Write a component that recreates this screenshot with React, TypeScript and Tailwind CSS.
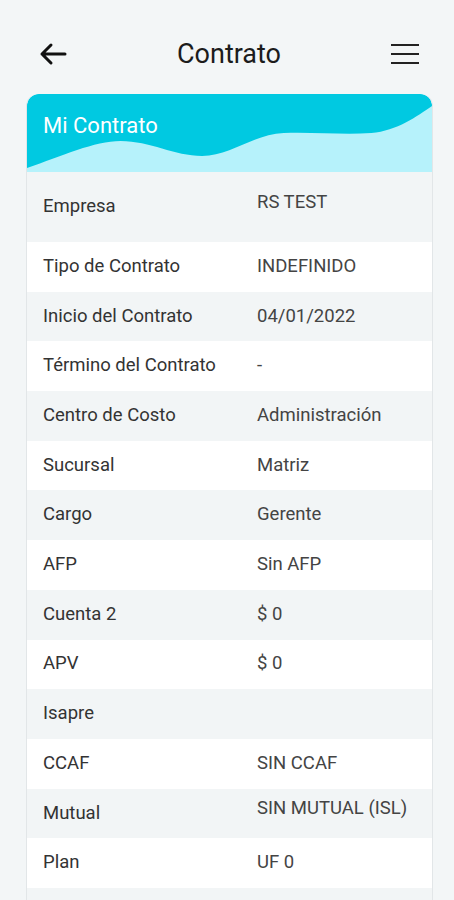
import React from "react";

type Row = { label: string; value: string; lift?: boolean; tall?: boolean };

const rows: Row[] = [
  { label: "Empresa", value: "RS TEST", lift: true, tall: true },
  { label: "Tipo de Contrato", value: "INDEFINIDO" },
  { label: "Inicio del Contrato", value: "04/01/2022" },
  { label: "Término del Contrato", value: "-" },
  { label: "Centro de Costo", value: "Administración" },
  { label: "Sucursal", value: "Matriz" },
  { label: "Cargo", value: "Gerente" },
  { label: "AFP", value: "Sin AFP" },
  { label: "Cuenta 2", value: "$ 0" },
  { label: "APV", value: "$ 0" },
  { label: "Isapre", value: "" },
  { label: "CCAF", value: "SIN CCAF" },
  { label: "Mutual", value: "SIN MUTUAL (ISL)", lift: true },
  { label: "Plan", value: "UF 0" },
  { label: "", value: "" },
];

const WaveHeader = () => {
  return (
    <div className="relative h-[78px] bg-[#b6f2fb] overflow-hidden rounded-t-[12px]">
      <svg
        className="absolute inset-0 w-full h-full"
        viewBox="0 0 407 78"
        preserveAspectRatio="none"
      >
        <path
          d="M0 74 C35 62 68 47 94 47 C124 47 148 62 176 62 C204 62 228 40 258 39 C290 38 318 41 346 39 C372 37 392 22 407 12 L407 0 L0 0 Z"
          fill="#00c9e1"
        />
      </svg>
      <span className="absolute left-[16px] top-[15px] text-[22px] text-white">
        Mi Contrato
      </span>
    </div>
  );
};

const App = () => {
  return (
    <div
      className="min-h-[900px] bg-[#f3f6f7] text-[#333] pt-[27px]"
      style={{ fontFamily: "Roboto, 'Noto Sans', sans-serif" }}
    >
      <div className="flex items-center justify-between h-[54px] pl-[39px] pr-[35px]">
        <svg width="28" height="24" viewBox="0 0 28 24" fill="none">
          <path
            d="M26 12 H3 M12 3 L3 12 L12 21"
            stroke="#111"
            strokeWidth="3"
            strokeLinecap="round"
            strokeLinejoin="round"
          />
        </svg>
        <h1 className="text-[27px] text-[#1c1c1c]">Contrato</h1>
        <div className="flex flex-col gap-[6.5px] w-[28px]">
          <span className="h-[2.5px] bg-[#222]" />
          <span className="h-[2.5px] bg-[#222]" />
          <span className="h-[2.5px] bg-[#222]" />
        </div>
      </div>

      <div className="mx-[26px] mt-[13px] w-[407px] border border-[#e2e6e8] border-t-0 rounded-t-[12px] bg-white overflow-hidden">
        <WaveHeader />
        {rows.map((r, i) => (
          <div
            key={i}
            className={`flex items-center px-[16px] text-[18.5px] ${
              r.tall ? "h-[70px]" : "h-[49.7px]"
            } ${i % 2 === 0 ? "bg-[#f2f5f6]" : "bg-white"}`}
          >
            <span className="w-[214px] text-[#333]">{r.label}</span>
            <span className={`text-[#444] ${r.lift ? "-mt-[9px]" : ""}`}>
              {r.value}
            </span>
          </div>
        ))}
      </div>
    </div>
  );
};

export default App;
